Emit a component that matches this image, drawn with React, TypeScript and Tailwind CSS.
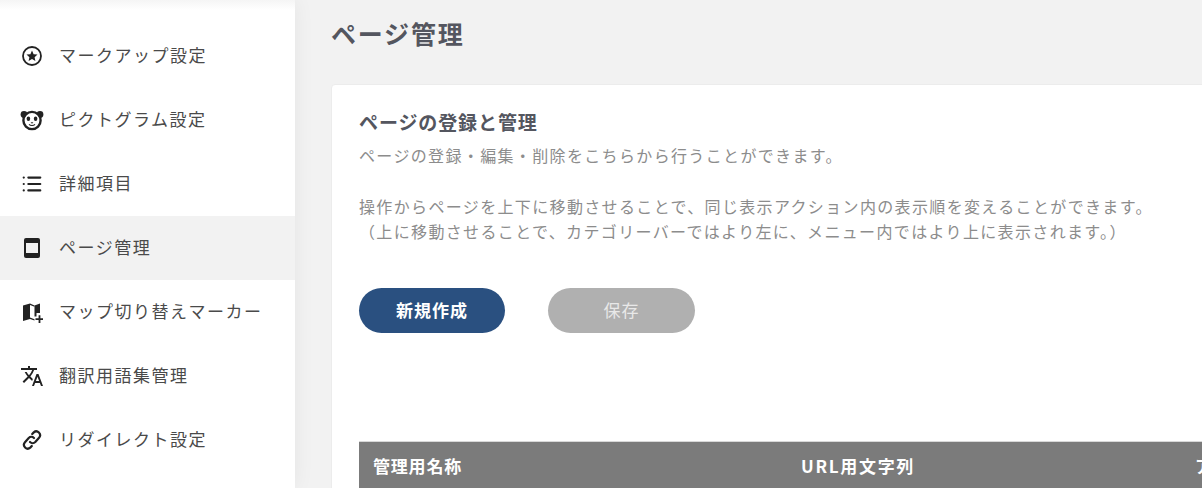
import { List } from "lucide-react";
import { MdTranslate } from "react-icons/md";
import { ReactNode } from "react";

const StarIcon = () => (
  <svg viewBox="0 0 22 22" className="w-[22px] h-[22px]">
    <circle cx="11" cy="11" r="9" fill="none" stroke="#222" strokeWidth="1.8" />
    <path d="M11 5.6l1.6 3.6 3.9.4-2.9 2.6.8 3.8-3.4-2-3.4 2 .8-3.8-2.9-2.6 3.9-.4z" fill="#222" />
  </svg>
);

const PandaIcon = () => (
  <svg viewBox="0 0 24 22" className="w-[24px] h-[22px]">
    <circle cx="4" cy="5.5" r="3.4" fill="#222" />
    <circle cx="20" cy="5.5" r="3.4" fill="#222" />
    <circle cx="12" cy="11.5" r="8.6" fill="#fff" stroke="#222" strokeWidth="2.4" />
    <ellipse cx="8.4" cy="9.8" rx="1.8" ry="2.2" fill="#222" />
    <ellipse cx="15.6" cy="9.8" rx="1.8" ry="2.2" fill="#222" />
    <path d="M10.6 13.2h2.8l-1.4 1.5z" fill="#222" />
    <path d="M9 15.4c1.5 1.4 4.5 1.4 6 0" fill="none" stroke="#222" strokeWidth="1.1" />
  </svg>
);

const PageIcon = () => (
  <svg viewBox="0 0 16 20" className="w-[16px] h-[20px]">
    <rect x="0" y="0" width="16" height="20" rx="2" fill="#222" />
    <rect x="2" y="5" width="12" height="10" fill="#f2f2f2" />
  </svg>
);

const MapPlusIcon = () => (
  <svg viewBox="0 0 22 22" className="w-[22px] h-[22px]">
    <path d="M2 4.5L9 2.5V18L2 20z" fill="#222" />
    <path d="M9 2.5l4.5 2v1.2L9 4z" fill="#222" />
    <path d="M13.5 4.5L19 2.5V12h-3.5v3.5h-2z" fill="#222" />
    <path d="M9 16.6l4.5 1.6v1.4L9 18z" fill="#222" />
    <path d="M18.5 14.2v8M14.5 18.2h8" stroke="#222" strokeWidth="1.8" />
  </svg>
);

const LinkIcon = () => (
  <svg viewBox="0 0 20 20" className="w-[22px] h-[22px]" fill="none" stroke="#222" strokeWidth="2" strokeLinecap="round">
    <path d="M8.2 11.8a3.4 3.4 0 0 0 4.8 0l3.4-3.9a3.4 3.4 0 0 0-4.8-4.8l-1.4 1.5" />
    <path d="M11.8 8.2a3.4 3.4 0 0 0-4.8 0l-3.4 3.9a3.4 3.4 0 0 0 4.8 4.8l1.4-1.5" />
  </svg>
);

const SideItem = ({ icon, label, active }: { icon: ReactNode; label: string; active?: boolean }) => (
  <div className={`flex items-center h-16 pl-5 ${active ? "bg-[#f2f2f2]" : ""}`}>
    <div className="w-6 flex justify-center shrink-0">{icon}</div>
    <span className="ml-[15px] pb-[3px] text-[17px] tracking-[1.5px] text-[#4a4a4a]">{label}</span>
  </div>
);

export default function App() {
  return (
    <div
      className="flex w-[1202px] h-[488px] overflow-hidden bg-[#f2f2f2]"
      style={{ fontFamily: '"Noto Sans CJK JP", "Noto Sans", sans-serif' }}
    >
      <aside className="relative z-10 w-[295px] shrink-0 bg-white h-full shadow-[0_0_20px_rgba(0,0,0,0.06)]">
        <div className="h-[10px] bg-gradient-to-b from-[#f5f5f5] to-white" />
        <div className="pt-[14px]">
          <SideItem icon={<StarIcon />} label="マークアップ設定" />
          <SideItem icon={<PandaIcon />} label="ピクトグラム設定" />
          <SideItem icon={<List size={22} color="#222" strokeWidth={2.4} />} label="詳細項目" />
          <SideItem icon={<PageIcon />} label="ページ管理" active />
          <SideItem icon={<MapPlusIcon />} label="マップ切り替えマーカー" />
          <SideItem icon={<MdTranslate size={26} color="#222" />} label="翻訳用語集管理" />
          <SideItem icon={<LinkIcon />} label="リダイレクト設定" />
        </div>
      </aside>
      <main className="flex-1 pl-9 min-w-0">
        <h1 className="h-[84px] pt-[15px] text-[25px] leading-9 font-bold tracking-[1.8px] text-[#54565f]">ページ管理</h1>
        <section className="w-[1000px] h-[600px] rounded-t-[4px] bg-white pl-[27px] pt-[24px] border border-[#ececec]">
          <h2 className="text-[19px] leading-[26px] font-bold tracking-[0.9px] text-[#54565f]">ページの登録と管理</h2>
          <div className="mt-[8px] text-[16px] leading-[25px] tracking-[1.35px] text-[#8c8c8c]">
            <p>ページの登録・編集・削除をこちらから行うことができます。</p>
            <p className="mt-[26px]">操作からページを上下に移動させることで、同じ表示アクション内の表示順を変えることができます。</p>
            <p>（上に移動させることで、カテゴリーバーではより左に、メニュー内ではより上に表示されます。）</p>
          </div>
          <div className="flex gap-[43px] mt-[44px]">
            <button className="w-[146px] h-[45px] pb-[2px] rounded-full bg-[#2a5080] text-white font-bold text-[17px] tracking-[1px]">新規作成</button>
            <button className="w-[147px] h-[45px] pb-[2px] rounded-full bg-[#b0b0b0] text-[#e8e8e8] text-[17px] tracking-[1px]">保存</button>
          </div>
          <div className="flex mt-[108px] h-[60px] bg-[#7b7b7b] border-t border-[#d8d8d8] text-white font-bold text-[17px] tracking-[0.8px]">
            <div className="w-[442px] pl-[14px] pt-[11px]">管理用名称</div>
            <div className="w-[394px] pt-[11px] tracking-[1.7px]">URL用文字列</div>
            <div className="pt-[11px] whitespace-nowrap">アクション</div>
          </div>
        </section>
      </main>
    </div>
  );
}
